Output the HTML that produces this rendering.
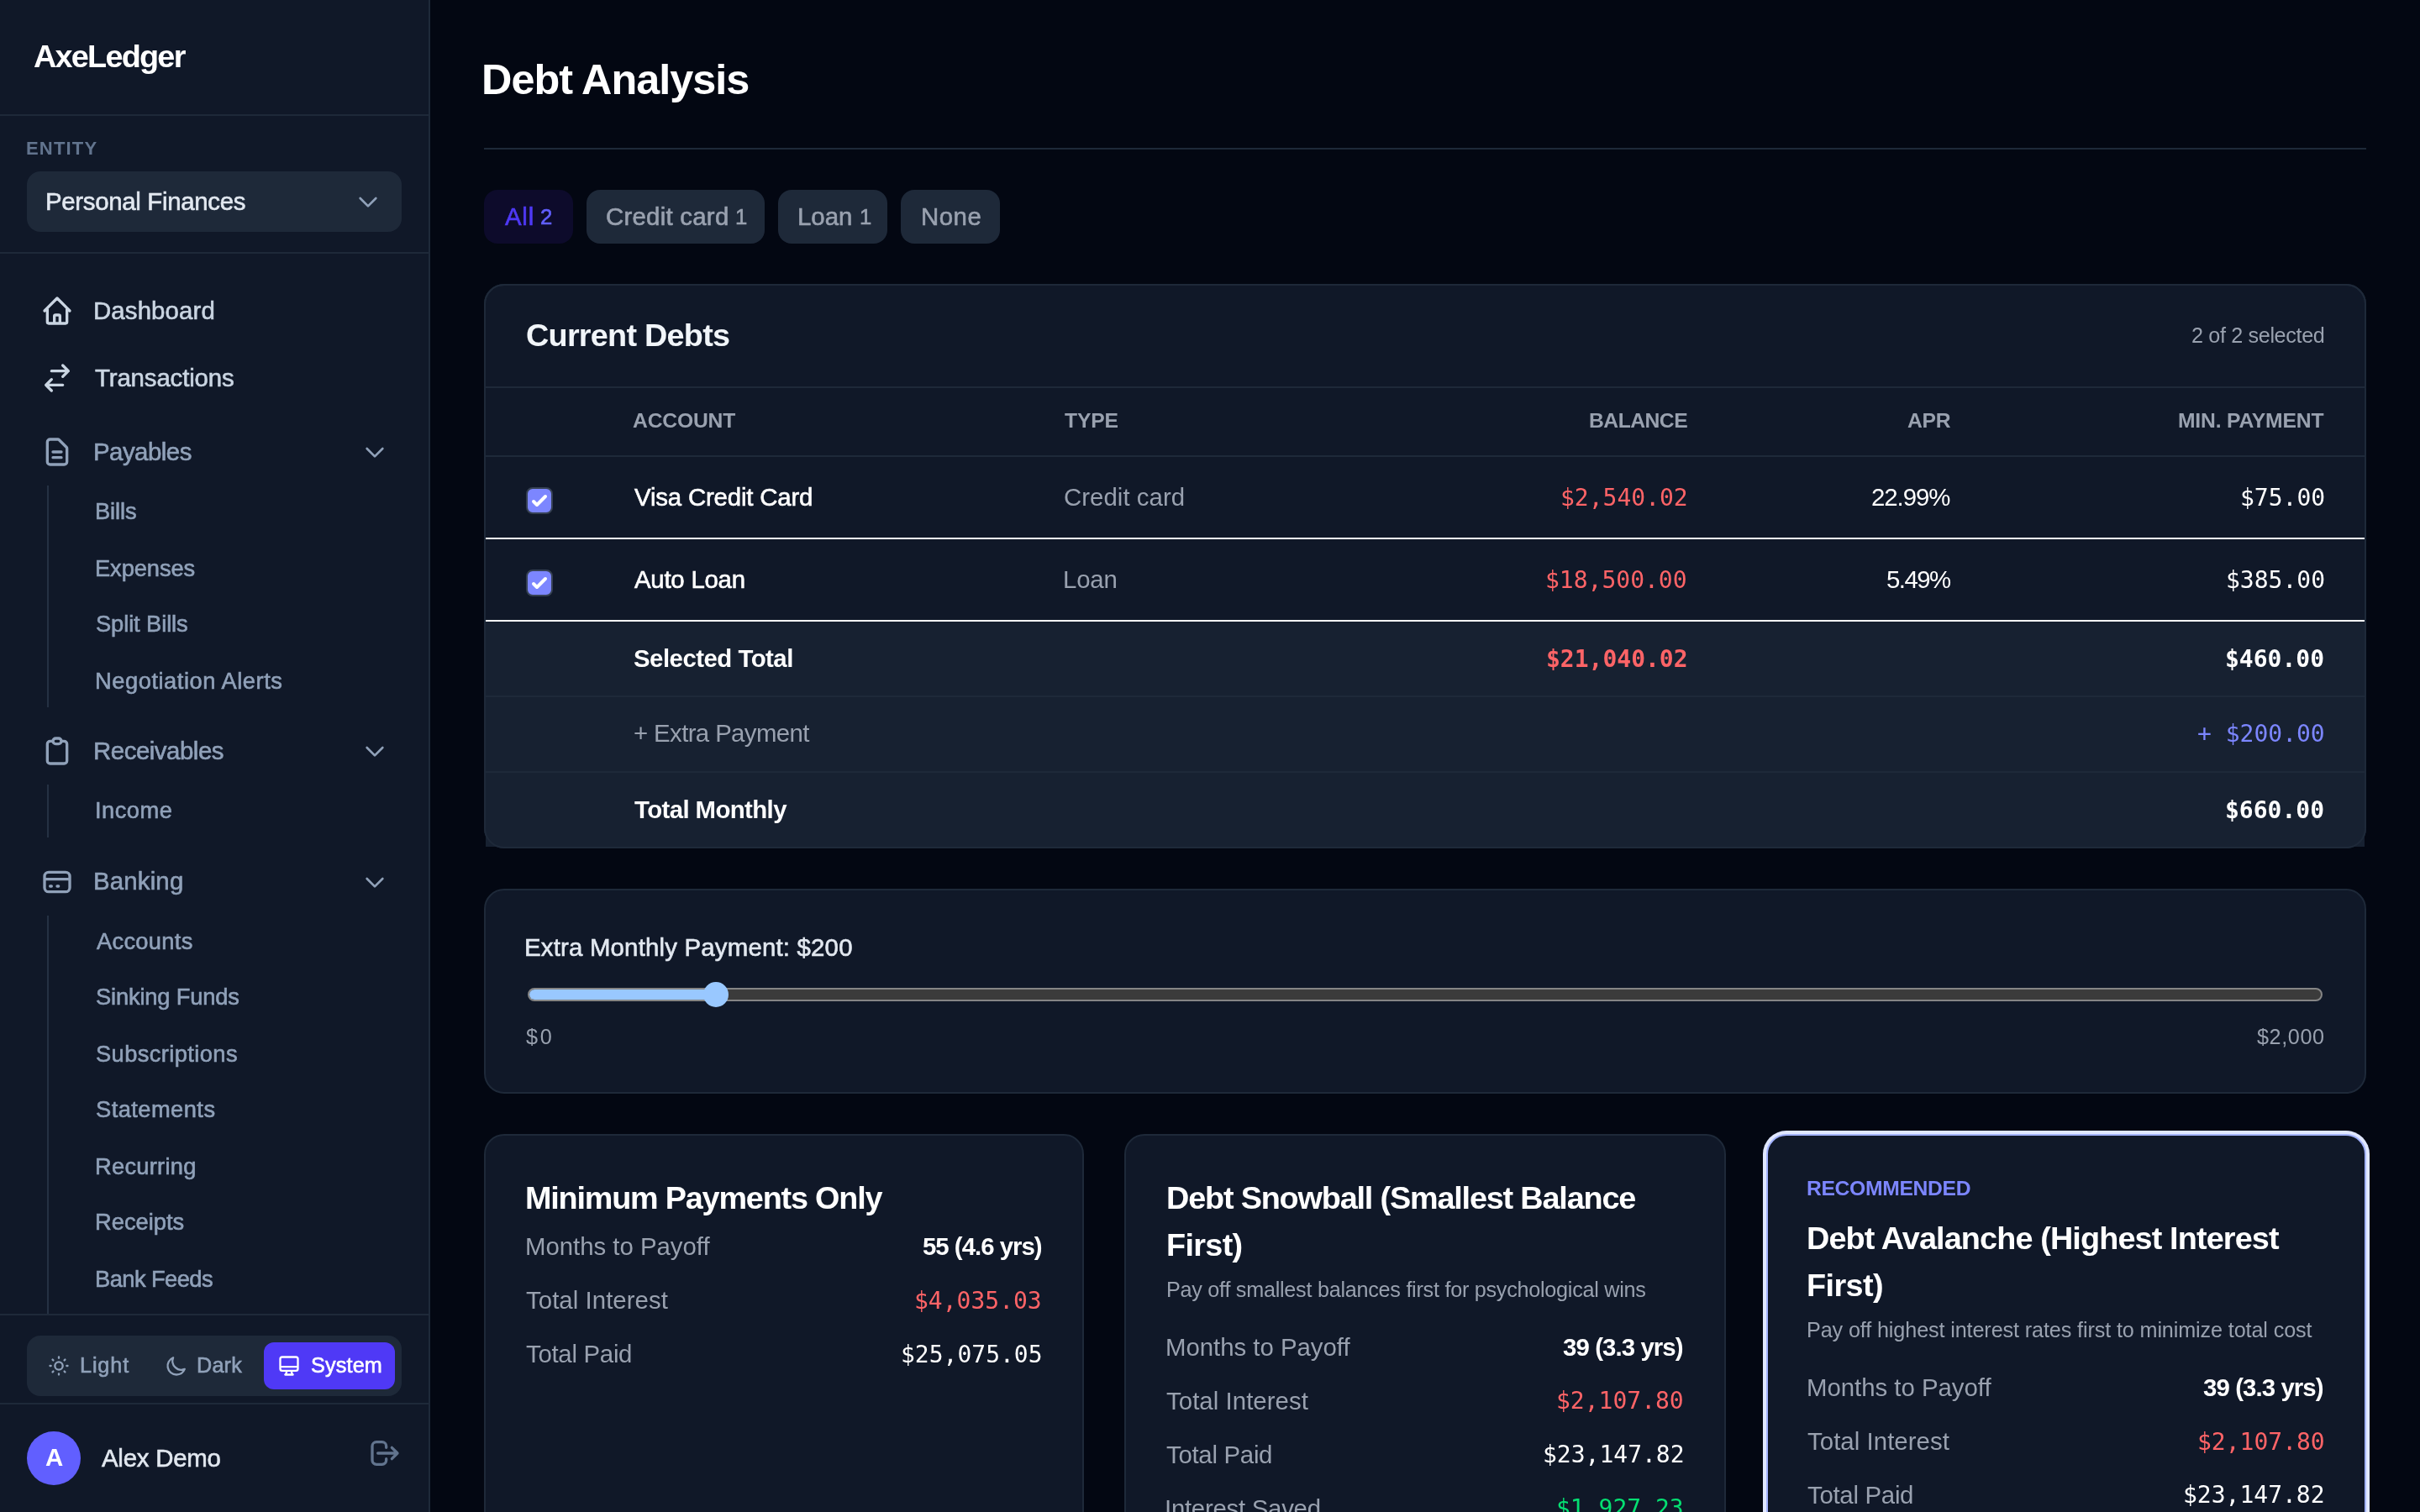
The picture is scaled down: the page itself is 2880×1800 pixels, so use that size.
<!DOCTYPE html>
<html lang="en">
<head>
<meta charset="utf-8">
<title>Debt Analysis - AxeLedger</title>
<meta name="viewport" content="width=2880">
<style>
*{box-sizing:border-box;margin:0;padding:0}
html,body{width:2880px;height:1800px;overflow:hidden;background:#030712}
body{position:relative;font-family:"Liberation Sans",sans-serif;-webkit-font-smoothing:antialiased}
.a{position:absolute;display:block}
.t{position:absolute;display:block;white-space:pre;line-height:1;font-weight:400;will-change:transform}
.s{font-family:"Liberation Sans",sans-serif}
.m{font-family:"DejaVu Sans Mono","Liberation Mono",monospace}
.b{font-weight:700}
.md{-webkit-text-stroke:0.6px currentColor}
.card{background:#101828;border:2px solid #1e2939;border-radius:24px}
.hl{height:2px;background:#1e2939}
.cb{width:32px;height:32px;border:2px solid #364153;border-radius:8px;background:#7c86ff;overflow:hidden}
.cb svg{display:block;margin:-2px 0 0 -2px}
</style>
</head>
<body>
<aside>
<div class="a" style="left:0px;top:0px;width:512px;height:1800px;background:#101828;border-right:2px solid #1e2939"></div>
<header>
<span class="t s b" style="left:39.8px;top:49.1px;font-size:37.8px;color:#ffffff;letter-spacing:-1.75px">AxeLedger</span>
<div class="a" style="left:0px;top:136px;width:510px;height:2px;background:#1e2939"></div>
</header>
<section>
<span class="t s b" style="left:31.2px;top:165.88px;font-size:22.05px;color:#62748e;letter-spacing:1.16px">ENTITY</span>
<div class="a" style="left:32px;top:204px;width:446px;height:72px;background:#1e2939;border-radius:16px"></div>
<span class="t s md" style="left:54.3px;top:225.1px;font-size:29.4px;color:#e2e8f0;letter-spacing:-0.31px">Personal Finances</span>
<svg class="a" style="left:422px;top:224px" width="32" height="32" viewBox="0 0 24 24" fill="none" stroke="#90a1b9" stroke-width="2" stroke-linecap="round" stroke-linejoin="round"><path d="M19 9l-7 7-7-7"/></svg>
<div class="a" style="left:0px;top:300px;width:510px;height:2px;background:#1e2939"></div>
</section>
<nav>
<svg class="a" style="left:48px;top:350px" width="40" height="40" viewBox="0 0 24 24" fill="none" stroke="#cad5e2" stroke-width="2" stroke-linecap="round" stroke-linejoin="round"><path d="M3 12l2-2m0 0l7-7 7 7M5 10v10a1 1 0 001 1h3m10-11l2 2m-2-2v10a1 1 0 01-1 1h-3m-6 0a1 1 0 001-1v-4a1 1 0 011-1h2a1 1 0 011 1v4a1 1 0 001 1m-6 0h6"/></svg>
<svg class="a" style="left:48px;top:430px" width="40" height="40" viewBox="0 0 24 24" fill="none" stroke="#cad5e2" stroke-width="2" stroke-linecap="round" stroke-linejoin="round"><path d="M8 7h12m0 0l-4-4m4 4l-4 4m0 6H4m0 0l4 4m-4-4l4-4"/></svg>
<svg class="a" style="left:48px;top:518px" width="40" height="40" viewBox="0 0 24 24" fill="none" stroke="#90a1b9" stroke-width="2" stroke-linecap="round" stroke-linejoin="round"><path d="M9 12h6m-6 4h6m2 5H7a2 2 0 01-2-2V5a2 2 0 012-2h5.586a1 1 0 01.707.293l5.414 5.414a1 1 0 01.293.707V19a2 2 0 01-2 2z"/></svg>
<svg class="a" style="left:430px;top:522px" width="32" height="32" viewBox="0 0 24 24" fill="none" stroke="#90a1b9" stroke-width="2" stroke-linecap="round" stroke-linejoin="round"><path d="M19 9l-7 7-7-7"/></svg>
<div class="a" style="left:56px;top:578px;width:2px;height:264px;background:#253143"></div>
<svg class="a" style="left:48px;top:874px" width="40" height="40" viewBox="0 0 24 24" fill="none" stroke="#90a1b9" stroke-width="2" stroke-linecap="round" stroke-linejoin="round"><path d="M9 5H7a2 2 0 00-2 2v12a2 2 0 002 2h10a2 2 0 002-2V7a2 2 0 00-2-2h-2M9 5a2 2 0 002 2h2a2 2 0 002-2M9 5a2 2 0 012-2h2a2 2 0 012 2"/></svg>
<svg class="a" style="left:430px;top:878px" width="32" height="32" viewBox="0 0 24 24" fill="none" stroke="#90a1b9" stroke-width="2" stroke-linecap="round" stroke-linejoin="round"><path d="M19 9l-7 7-7-7"/></svg>
<div class="a" style="left:56px;top:934px;width:2px;height:63px;background:#253143"></div>
<svg class="a" style="left:48px;top:1030px" width="40" height="40" viewBox="0 0 24 24" fill="none" stroke="#90a1b9" stroke-width="2" stroke-linecap="round" stroke-linejoin="round"><path d="M3 10h18M7 15h1m4 0h1m-7 4h12a3 3 0 003-3V8a3 3 0 00-3-3H6a3 3 0 00-3 3v8a3 3 0 003 3z"/></svg>
<svg class="a" style="left:430px;top:1034px" width="32" height="32" viewBox="0 0 24 24" fill="none" stroke="#90a1b9" stroke-width="2" stroke-linecap="round" stroke-linejoin="round"><path d="M19 9l-7 7-7-7"/></svg>
<div class="a" style="left:56px;top:1090px;width:2px;height:474px;background:#253143"></div>
<span class="t s md" style="left:111px;top:354.8px;font-size:29.4px;color:#cad5e2;letter-spacing:0.12px">Dashboard</span>
<span class="t s md" style="left:113px;top:434.8px;font-size:29.4px;color:#cad5e2;letter-spacing:-0.13px">Transactions</span>
<span class="t s md" style="left:111px;top:522.8px;font-size:29.4px;color:#90a1b9;letter-spacing:-0.51px">Payables</span>
<span class="t s md" style="left:113px;top:594.85px;font-size:27.3px;color:#90a1b9;letter-spacing:-0.1px">Bills</span>
<span class="t s md" style="left:113px;top:662.65px;font-size:27.3px;color:#90a1b9;letter-spacing:-0.09px">Expenses</span>
<span class="t s md" style="left:114px;top:728.65px;font-size:27.3px;color:#90a1b9;letter-spacing:-0.1px">Split Bills</span>
<span class="t s md" style="left:113px;top:796.75px;font-size:27.3px;color:#90a1b9;letter-spacing:0.53px">Negotiation Alerts</span>
<span class="t s md" style="left:111px;top:878.8px;font-size:29.4px;color:#90a1b9;letter-spacing:-0.46px">Receivables</span>
<span class="t s md" style="left:113px;top:950.85px;font-size:27.3px;color:#90a1b9;letter-spacing:0.48px">Income</span>
<span class="t s md" style="left:111px;top:1034.4px;font-size:29.4px;color:#90a1b9;letter-spacing:0.17px">Banking</span>
<span class="t s md" style="left:115px;top:1106.85px;font-size:27.3px;color:#90a1b9;letter-spacing:0.29px">Accounts</span>
<span class="t s md" style="left:114px;top:1172.85px;font-size:27.3px;color:#90a1b9;letter-spacing:-0.17px">Sinking Funds</span>
<span class="t s md" style="left:114px;top:1240.65px;font-size:27.3px;color:#90a1b9;letter-spacing:0.39px">Subscriptions</span>
<span class="t s md" style="left:114px;top:1306.85px;font-size:27.3px;color:#90a1b9;letter-spacing:0.44px">Statements</span>
<span class="t s md" style="left:113px;top:1374.85px;font-size:27.3px;color:#90a1b9;letter-spacing:0.25px">Recurring</span>
<span class="t s md" style="left:113px;top:1440.85px;font-size:27.3px;color:#90a1b9">Receipts</span>
<span class="t s md" style="left:113px;top:1508.85px;font-size:27.3px;color:#90a1b9;letter-spacing:-0.56px">Bank Feeds</span>
</nav>
<footer>
<div class="a" style="left:0px;top:1564px;width:510px;height:2px;background:#1e2939"></div>
<div class="a" style="left:32px;top:1590px;width:446px;height:72px;background:#1e2939;border-radius:16px"></div>
<div class="a" style="left:314px;top:1598px;width:156px;height:56px;background:#4f39f6;border-radius:12px"></div>
<svg class="a" style="left:56px;top:1612px" width="28" height="28" viewBox="0 0 24 24" fill="none" stroke="#90a1b9" stroke-width="2" stroke-linecap="round" stroke-linejoin="round"><path d="M12 3v1m0 16v1m9-9h-1M4 12H3m15.364 6.364l-.707-.707M6.343 6.343l-.707-.707m12.728 0l-.707.707M6.343 17.657l-.707.707M16 12a4 4 0 11-8 0 4 4 0 018 0z"/></svg>
<svg class="a" style="left:196px;top:1612px" width="28" height="28" viewBox="0 0 24 24" fill="none" stroke="#90a1b9" stroke-width="2" stroke-linecap="round" stroke-linejoin="round"><path d="M20.354 15.354A9 9 0 018.646 3.646 9.003 9.003 0 0012 21a9.003 9.003 0 008.354-5.646z"/></svg>
<svg class="a" style="left:330px;top:1612px" width="28" height="28" viewBox="0 0 24 24" fill="none" stroke="#fff" stroke-width="2" stroke-linecap="round" stroke-linejoin="round"><path d="M9.75 17L9 20l-1 1h8l-1-1-.75-3M3 13h18M5 17h14a2 2 0 002-2V5a2 2 0 00-2-2H5a2 2 0 00-2 2v10a2 2 0 002 2z"/></svg>
<span class="t s md" style="left:94.7px;top:1613.1px;font-size:25.2px;color:#90a1b9;letter-spacing:0.88px">Light</span>
<span class="t s md" style="left:234.4px;top:1613.1px;font-size:25.2px;color:#90a1b9;letter-spacing:0.2px">Dark</span>
<span class="t s md" style="left:369.6px;top:1613.1px;font-size:25.2px;color:#ffffff;letter-spacing:0.16px">System</span>
<div class="a" style="left:0px;top:1670px;width:510px;height:2px;background:#1e2939"></div>
<div class="a" style="left:32px;top:1704px;width:64px;height:64px;background:#615fff;border-radius:32px"></div>
<span class="t s b" style="left:53.5px;top:1720.4px;font-size:29.4px;color:#ffffff">A</span>
<span class="t s md" style="left:121.4px;top:1720.8px;font-size:29.4px;color:#e2e8f0;letter-spacing:-0.23px">Alex Demo</span>
<svg class="a" style="left:438px;top:1710px" width="40" height="40" viewBox="0 0 24 24" fill="none" stroke="#62748e" stroke-width="2" stroke-linecap="round" stroke-linejoin="round"><path d="M17 16l4-4m0 0l-4-4m4 4H7m6 4v1a3 3 0 01-3 3H6a3 3 0 01-3-3V7a3 3 0 013-3h4a3 3 0 013 3v1"/></svg>
</footer>
</aside>
<main>
<header>
<span class="t s b" style="left:573.3px;top:69.8px;font-size:50.4px;color:#ffffff;letter-spacing:-1px">Debt Analysis</span>
<div class="a" style="left:576px;top:176px;width:2240px;height:2px;background:#1e2939"></div>
</header>
<div>
<div class="a" style="left:576px;top:226px;width:106px;height:64px;background:#0d0b2b;border-radius:16px"></div>
<div class="a" style="left:698px;top:226px;width:212px;height:64px;background:#1e2939;border-radius:16px"></div>
<div class="a" style="left:926px;top:226px;width:130px;height:64px;background:#1e2939;border-radius:16px"></div>
<div class="a" style="left:1072px;top:226px;width:118px;height:64px;background:#1e2939;border-radius:16px"></div>
<span class="t s md" style="left:601.25px;top:242.8px;font-size:29.4px;color:#4f39f6;letter-spacing:0.75px">All</span>
<span class="t s md" style="left:643.25px;top:246.13px;font-size:25.73px;color:#615fff">2</span>
<span class="t s md" style="left:721px;top:242.8px;font-size:29.4px;color:#99a1af;letter-spacing:0.25px">Credit card</span>
<span class="t s md" style="left:875px;top:246.13px;font-size:25.73px;color:#99a1af">1</span>
<span class="t s md" style="left:948.75px;top:242.8px;font-size:29.4px;color:#99a1af">Loan</span>
<span class="t s md" style="left:1022.75px;top:246.13px;font-size:25.73px;color:#99a1af">1</span>
<span class="t s md" style="left:1095.5px;top:242.8px;font-size:29.4px;color:#99a1af;letter-spacing:0.5px">None</span>
</div>
<section>
<div class="a card" style="left:576px;top:338px;width:2240px;height:672px"></div>
<div class="a" style="left:578px;top:460px;width:2236px;height:2px;background:#1e2939"></div>
<div class="a" style="left:578px;top:542px;width:2236px;height:2px;background:#1e2939"></div>
<div class="a" style="left:578px;top:640px;width:2236px;height:2px;background:#ffffff"></div>
<div class="a" style="left:578px;top:738px;width:2236px;height:2px;background:#ffffff"></div>
<div class="a" style="left:578px;top:740px;width:2236px;height:268px;background:#172131"></div>
<div class="a" style="left:578px;top:828px;width:2236px;height:2px;background:#1e2939"></div>
<div class="a" style="left:578px;top:918px;width:2236px;height:2px;background:#1e2939"></div>
<div class="a" style="left:576px;top:338px;width:2240px;height:672px;border:2px solid #1e2939;border-radius:24px"></div>
<span class="a cb" style="left:626px;top:580px"><svg width="32" height="32" viewBox="0 0 16 16" fill="#fff"><path d="M12.207 4.793a1 1 0 010 1.414l-5 5a1 1 0 01-1.414 0l-2-2a1 1 0 011.414-1.414L6.5 9.086l4.293-4.293a1 1 0 011.414 0z"/></svg></span>
<span class="a cb" style="left:626px;top:678px"><svg width="32" height="32" viewBox="0 0 16 16" fill="#fff"><path d="M12.207 4.793a1 1 0 010 1.414l-5 5a1 1 0 01-1.414 0l-2-2a1 1 0 011.414-1.414L6.5 9.086l4.293-4.293a1 1 0 011.414 0z"/></svg></span>
<span class="t s b" style="left:625.5px;top:380.8px;font-size:37.8px;color:#f1f5f9;letter-spacing:-0.75px">Current Debts</span>
<span class="t s" style="left:2608px;top:386.7px;font-size:25.2px;color:#99a1af;letter-spacing:-0.36px">2 of 2 selected</span>
<span class="t s b" style="left:753.3px;top:489.16px;font-size:24.68px;color:#99a1af;letter-spacing:-0.17px">ACCOUNT</span>
<span class="t s b" style="left:1267px;top:489.16px;font-size:24.68px;color:#99a1af;letter-spacing:-0.17px">TYPE</span>
<span class="t s b" style="left:1890.6px;top:489.16px;font-size:24.68px;color:#99a1af;letter-spacing:-0.5px">BALANCE</span>
<span class="t s b" style="left:2270.3px;top:489.16px;font-size:24.68px;color:#99a1af;letter-spacing:-0.3px">APR</span>
<span class="t s b" style="left:2592px;top:489.16px;font-size:24.68px;color:#99a1af;letter-spacing:-0.18px">MIN. PAYMENT</span>
<span class="t s md" style="left:754.5px;top:576.8px;font-size:29.4px;color:#ffffff;letter-spacing:-0.18px">Visa Credit Card</span>
<span class="t s" style="left:1266px;top:576.8px;font-size:29.4px;color:#99a1af;letter-spacing:0.03px">Credit card</span>
<span class="t m" style="left:1857.3px;top:578.5px;font-size:28px;color:#ff6467">$2,540.02</span>
<span class="t s" style="left:2227px;top:576.8px;font-size:29.4px;color:#ffffff;letter-spacing:-1.06px">22.99%</span>
<span class="t m" style="left:2665.5px;top:578.5px;font-size:28px;color:#ffffff">$75.00</span>
<span class="t s md" style="left:754.5px;top:674.8px;font-size:29.4px;color:#ffffff;letter-spacing:-0.25px">Auto Loan</span>
<span class="t s" style="left:1265px;top:674.8px;font-size:29.4px;color:#99a1af;letter-spacing:-0.17px">Loan</span>
<span class="t m" style="left:1839.3px;top:676.5px;font-size:28px;color:#ff6467">$18,500.00</span>
<span class="t s" style="left:2244.9px;top:674.8px;font-size:29.4px;color:#ffffff;letter-spacing:-1.55px">5.49%</span>
<span class="t m" style="left:2648.5px;top:676.5px;font-size:28px;color:#ffffff">$385.00</span>
<span class="t s b" style="left:753.6px;top:768.6px;font-size:29.4px;color:#ffffff;letter-spacing:-0.52px">Selected Total</span>
<span class="t m b" style="left:1840.3px;top:770.5px;font-size:28px;color:#ff6467">$21,040.02</span>
<span class="t m b" style="left:2647.5px;top:770.5px;font-size:28px;color:#ffffff">$460.00</span>
<span class="t s" style="left:754.2px;top:858.4px;font-size:29.4px;color:#99a1af;letter-spacing:-0.62px">+ Extra Payment</span>
<span class="t m" style="left:2614.7px;top:860.1px;font-size:28px;color:#7c86ff">+ $200.00</span>
<span class="t s b" style="left:754.6px;top:948.8px;font-size:29.4px;color:#ffffff;letter-spacing:-0.61px">Total Monthly</span>
<span class="t m b" style="left:2647.5px;top:950.5px;font-size:28px;color:#ffffff">$660.00</span>
</section>
<section>
<div class="a card" style="left:576px;top:1058px;width:2240px;height:244px"></div>
<div class="a" style="left:628px;top:1176px;width:2136px;height:16px;background:#3b3b3b;border-radius:8px;border:2px solid #858585;overflow:hidden"><div class="a" style="left:-2px;top:-2px;width:226px;height:16px;background:#99c8ff;border:2px solid #858585;border-right:0;border-radius:8px 0 0 8px"></div></div>
<div class="a" style="left:837.4px;top:1169px;width:30px;height:30px;background:#99c8ff;border-radius:15px"></div>
<span class="t s md" style="left:624px;top:1113.1px;font-size:29.4px;color:#e2e8f0;letter-spacing:0.19px">Extra Monthly Payment: $200</span>
<span class="t s" style="left:626px;top:1222.4px;font-size:25.2px;color:#99a1af;letter-spacing:2.7px">$0</span>
<span class="t s" style="left:2685.7px;top:1222.4px;font-size:25.2px;color:#99a1af;letter-spacing:0.6px">$2,000</span>
</section>
<section>
<div class="a card" style="left:576px;top:1350px;width:714px;height:600px"></div>
<span class="t s b" style="left:624.7px;top:1408.3px;font-size:37.8px;color:#ffffff;letter-spacing:-1.2px">Minimum Payments Only</span>
<span class="t s" style="left:624.7px;top:1468.8px;font-size:29.4px;color:#99a1af;letter-spacing:-0.03px">Months to Payoff</span>
<span class="t s b" style="left:1097.8px;top:1469px;font-size:29.4px;color:#ffffff;letter-spacing:-1px">55 (4.6 yrs)</span>
<span class="t s" style="left:625.7px;top:1532.8px;font-size:29.4px;color:#99a1af;letter-spacing:0.05px">Total Interest</span>
<span class="t m" style="left:1088.4px;top:1534.8px;font-size:28px;color:#ff6467">$4,035.03</span>
<span class="t s" style="left:625.7px;top:1596.8px;font-size:29.4px;color:#99a1af;letter-spacing:-0.29px">Total Paid</span>
<span class="t m" style="left:1072.4px;top:1598.8px;font-size:28px;color:#ffffff">$25,075.05</span>
</section>
<section>
<div class="a card" style="left:1338px;top:1350px;width:716px;height:600px"></div>
<span class="t s b" style="left:1387.8px;top:1407.9px;font-size:37.8px;color:#ffffff;letter-spacing:-1.17px">Debt Snowball (Smallest Balance</span>
<span class="t s b" style="left:1387.8px;top:1463.8px;font-size:37.8px;color:#ffffff;letter-spacing:-0.66px">First)</span>
<span class="t s" style="left:1387.6px;top:1522.5px;font-size:25.2px;color:#99a1af;letter-spacing:-0.26px">Pay off smallest balances first for psychological wins</span>
<span class="t s" style="left:1387.3px;top:1588.6px;font-size:29.4px;color:#99a1af;letter-spacing:-0.03px">Months to Payoff</span>
<span class="t s b" style="left:1860px;top:1588.6px;font-size:29.4px;color:#ffffff;letter-spacing:-0.91px">39 (3.3 yrs)</span>
<span class="t s" style="left:1388.3px;top:1652.6px;font-size:29.4px;color:#99a1af;letter-spacing:0.05px">Total Interest</span>
<span class="t m" style="left:1852px;top:1654.3px;font-size:28px;color:#ff6467">$2,107.80</span>
<span class="t s" style="left:1388.3px;top:1716.6px;font-size:29.4px;color:#99a1af;letter-spacing:-0.29px">Total Paid</span>
<span class="t m" style="left:1836px;top:1718.3px;font-size:28px;color:#ffffff">$23,147.82</span>
<span class="t s" style="left:1386.3px;top:1780.6px;font-size:29.4px;color:#99a1af;letter-spacing:-0.27px">Interest Saved</span>
<span class="t m" style="left:1852px;top:1782.3px;font-size:28px;color:#05df72">$1,927.23</span>
</section>
<section>
<div class="a card" style="left:2102px;top:1350px;width:714px;height:600px;border-color:#a3b3ff;box-shadow:0 0 0 4px #e0e7ff"></div>
<span class="t s b" style="left:2150.1px;top:1402.96px;font-size:24.68px;color:#7c86ff;letter-spacing:-0.33px">RECOMMENDED</span>
<span class="t s b" style="left:2150.4px;top:1455.9px;font-size:37.8px;color:#ffffff;letter-spacing:-0.87px">Debt Avalanche (Highest Interest</span>
<span class="t s b" style="left:2150.4px;top:1511.8px;font-size:37.8px;color:#ffffff;letter-spacing:-0.6px">First)</span>
<span class="t s" style="left:2150.4px;top:1570.5px;font-size:25.2px;color:#99a1af;letter-spacing:-0.12px">Pay off highest interest rates first to minimize total cost</span>
<span class="t s" style="left:2149.7px;top:1636.6px;font-size:29.4px;color:#99a1af;letter-spacing:-0.03px">Months to Payoff</span>
<span class="t s b" style="left:2622.3px;top:1636.8px;font-size:29.4px;color:#ffffff;letter-spacing:-0.91px">39 (3.3 yrs)</span>
<span class="t s" style="left:2150.7px;top:1700.6px;font-size:29.4px;color:#99a1af;letter-spacing:0.05px">Total Interest</span>
<span class="t m" style="left:2614.5px;top:1702.6px;font-size:28px;color:#ff6467">$2,107.80</span>
<span class="t s" style="left:2150.7px;top:1764.6px;font-size:29.4px;color:#99a1af;letter-spacing:-0.29px">Total Paid</span>
<span class="t m" style="left:2598.4px;top:1766.3px;font-size:28px;color:#ffffff">$23,147.82</span>
</section>
</main>
</body>
</html>
